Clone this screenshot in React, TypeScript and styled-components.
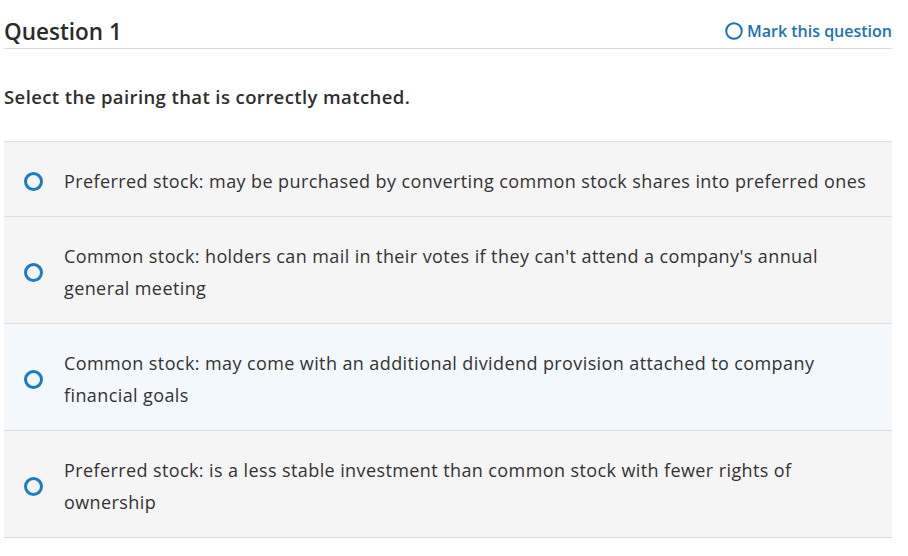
import styled, { createGlobalStyle } from 'styled-components';

const GlobalStyle = createGlobalStyle`
  body {
    margin: 0;
    background: #fff;
    font-family: "Open Sans", "Noto Sans", sans-serif;
    color: #333;
  }
`;

const Page = styled.div`
  width: 888px;
  padding: 0 0 0 4px;
`;

const Header = styled.div`
  display: flex;
  justify-content: space-between;
  align-items: baseline;
  height: 49px;
  padding-top: 18px;
  border-bottom: 1px solid #ddd;
  box-sizing: border-box;
`;

const Title = styled.h1`
  margin: 0;
  font-size: 22.5px;
  line-height: 28px;
  font-weight: 600;
  color: #2b2b2b;
`;

const MarkLink = styled.a`
  display: flex;
  align-items: center;
  gap: 4px;
  color: #1a72b8;
  font-size: 16px;
  font-weight: 600;
  text-decoration: none;
`;

const Prompt = styled.p`
  margin: 35px 0 32px;
  font-size: 18.5px;
  font-weight: 600;
  letter-spacing: 0.4px;
  color: #2e2e2e;
  line-height: 25px;
`;

const Options = styled.ul`
  list-style: none;
  margin: 0;
  padding: 0;
  border-top: 1px solid #ddd;
`;

const Option = styled.li<{ $active?: boolean }>`
  display: flex;
  align-items: center;
  background: ${({ $active }) => ($active ? '#f2f8fc' : '#f5f5f5')};
  border-bottom: 1px solid #ddd;
  padding: 23px 20px 19px 20px;
`;

const Radio = styled.span`
  flex: none;
  width: 13px;
  height: 13px;
  border: 3px solid #1a7dc4;
  border-radius: 50%;
  margin-right: 21px;
`;

const OptionText = styled.span`
  font-size: 18px;
  letter-spacing: 0.4px;
  line-height: 32px;
  color: #333;
`;

const options = [
  'Preferred stock: may be purchased by converting common stock shares into preferred ones',
  "Common stock: holders can mail in their votes if they can't attend a company's annual general meeting",
  'Common stock: may come with an additional dividend provision attached to company financial goals',
  'Preferred stock: is a less stable investment than common stock with fewer rights of ownership',
];

export default function App() {
  return (
    <>
      <GlobalStyle />
      <Page>
        <Header>
          <Title>Question 1</Title>
          <MarkLink href="#">
            <svg width="18" height="18" viewBox="0 0 18 18" style={{ alignSelf: 'center' }}>
              <circle cx="9" cy="9" r="7.8" fill="none" stroke="#1a72b8" strokeWidth="2" />
            </svg>
            Mark this question
          </MarkLink>
        </Header>
        <Prompt>Select the pairing that is correctly matched.</Prompt>
        <Options>
          {options.map((text, i) => (
            <Option key={i} $active={i === 2}>
              <Radio />
              <OptionText>{text}</OptionText>
            </Option>
          ))}
        </Options>
      </Page>
    </>
  );
}
